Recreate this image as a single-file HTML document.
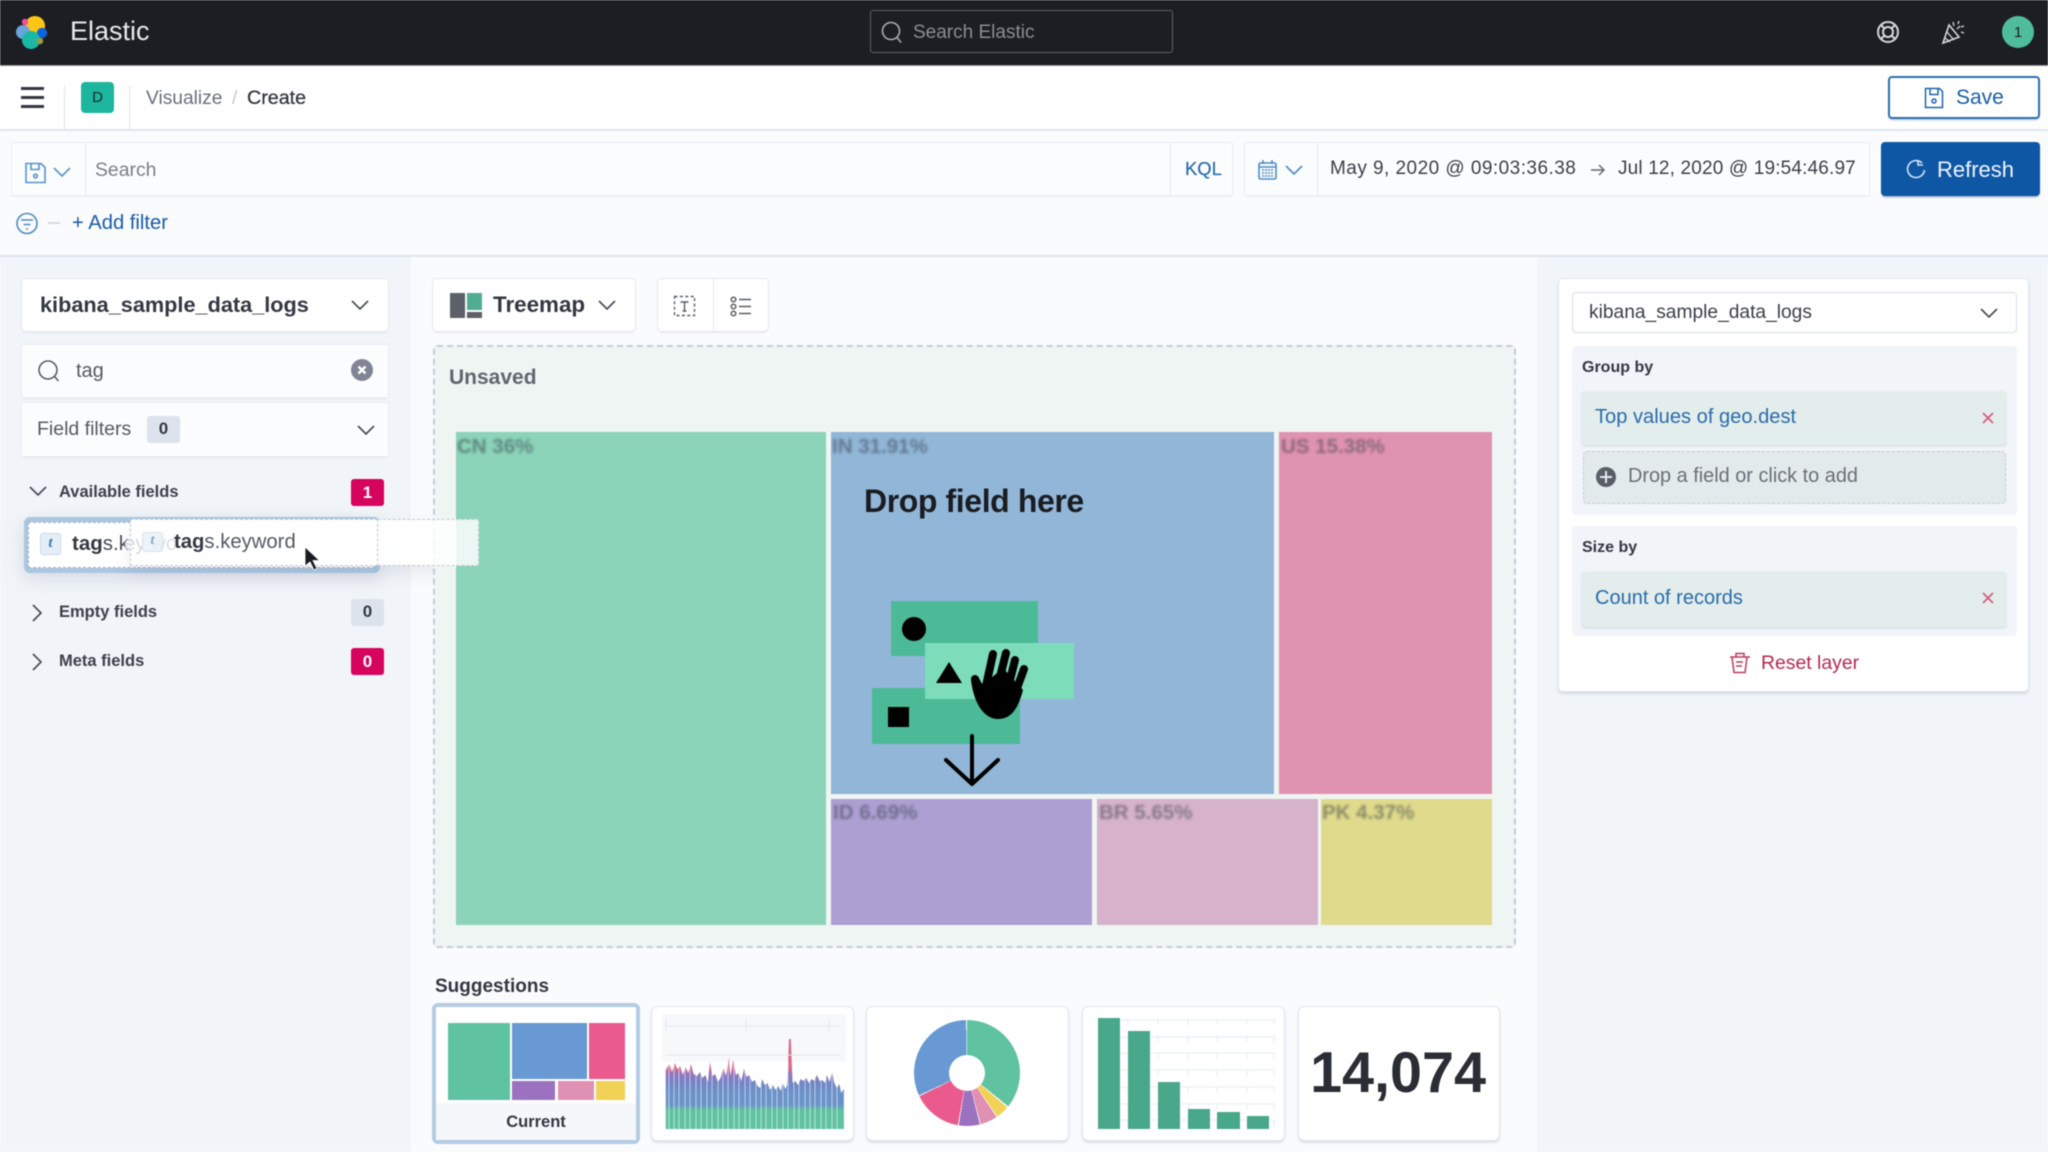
<!DOCTYPE html>
<html><head><meta charset="utf-8"><title>Elastic</title>
<style>
*{box-sizing:border-box}
html,body{margin:0;padding:0;width:2048px;height:1152px;overflow:hidden;background:#fafbfd;font-family:"Liberation Sans",sans-serif;color:#343741}
body{filter:blur(.4px)}
.a{position:absolute}
.t{position:absolute;white-space:nowrap;line-height:1}
.box{position:absolute;background:#fff;border-radius:4px;box-shadow:0 0 0 1px #e3e8f0,0 2px 2px -1px rgba(152,162,179,.45)}
.fbox{position:absolute;background:#fbfcfd;box-shadow:0 0 0 1px #e9edf3,0 2px 2px -1px rgba(152,162,179,.35)}
svg{position:absolute;overflow:visible}
.lbl{position:absolute;font-weight:bold;font-size:20.5px;line-height:1;color:rgba(50,60,70,.5);filter:blur(1.4px);white-space:nowrap}
.cell{position:absolute}
.card{position:absolute;background:#fff;border-radius:5px;box-shadow:0 0 0 1px #dfe5ef,0 2px 3px rgba(152,162,179,.5)}
</style></head><body>

<!-- top bar -->
<div class="a" style="left:0;top:0;width:2048px;height:66px;background:#1d1e24;border-bottom:1px solid #8f9196"></div>
<svg style="left:0;top:0" width="60" height="60">
<circle cx="35" cy="26" r="10" fill="#fec514"/>
<circle cx="25" cy="22" r="3.2" fill="#f04e98"/>
<circle cx="23" cy="32" r="7" fill="#6aa4dc"/>
<circle cx="42" cy="33" r="5.2" fill="#0b64dd"/>
<circle cx="31" cy="40" r="9" fill="#1bb9a5"/>
<circle cx="40" cy="41" r="3.2" fill="#9b9c3e"/>
</svg>
<div class="t" style="left:70px;top:18px;font-size:27px;color:#e9eaec">Elastic</div>
<div class="a" style="left:870px;top:10px;width:303px;height:43px;border:1px solid #5d5f65;border-radius:3px;background:#1d1e24"></div>
<svg style="left:878px;top:20px" width="28" height="24" fill="none" stroke="#a9abb0" stroke-width="1.6"><circle cx="13" cy="11" r="8.5"/><path d="M19 17.5l4 5"/></svg>
<div class="t" style="left:913px;top:23px;font-size:19px;color:#8b8d92">Search Elastic</div>
<svg style="left:1876px;top:20px" width="24" height="24" fill="none" stroke="#d6d7da" stroke-width="2"><circle cx="12" cy="12" r="10"/><circle cx="12" cy="12" r="5"/><path d="M5 5l3.5 3.5M19 5l-3.5 3.5M5 19l3.5-3.5M19 19l-3.5-3.5"/></svg>
<svg style="left:1940px;top:19px" width="26" height="26" fill="none" stroke="#d6d7da" stroke-width="1.6"><path d="M3 24L9 6l10 12z"/><path d="M7 13l7 8M5 19l5 4M13 3l1 4M19 2l-1 3M21 8l3-1M21 13l3 1M17 10l3-3" stroke-width="1.3"/></svg>
<div class="a" style="left:2002px;top:16px;width:32px;height:32px;border-radius:50%;background:#4fbd9a"></div>
<div class="t" style="left:2002px;top:25px;width:32px;text-align:center;font-size:15px;color:#1d1e24">1</div>

<!-- second bar -->
<div class="a" style="left:0;top:66px;width:2048px;height:65px;background:#fff;border-bottom:2px solid #dfe5ef"></div>
<div class="a" style="left:21px;top:87px;width:23px;height:3px;background:#343741"></div>
<div class="a" style="left:21px;top:96px;width:23px;height:3px;background:#343741"></div>
<div class="a" style="left:21px;top:105px;width:23px;height:3px;background:#343741"></div>
<div class="a" style="left:64px;top:85px;width:1px;height:45px;background:#dfe3ea"></div>
<div class="a" style="left:129px;top:85px;width:1px;height:45px;background:#dfe3ea"></div>
<div class="a" style="left:81px;top:82px;width:33px;height:31px;background:#1db59e;border-radius:4px"></div>
<div class="t" style="left:81px;top:90px;width:33px;text-align:center;font-size:15px;color:#1d2a2a">D</div>
<div class="t" style="left:146px;top:89px;font-size:19.2px;color:#69707d">Visualize</div>
<div class="t" style="left:232px;top:89px;font-size:19px;color:#c2c7cf">/</div>
<div class="t" style="left:247px;top:89px;font-size:19.7px;color:#343741;-webkit-text-stroke:.3px #343741">Create</div>
<div class="a" style="left:1888px;top:76px;width:152px;height:43px;background:#fff;border:2px solid #2b6fad;border-radius:4px;box-shadow:0 2px 2px -1px rgba(40,90,150,.4)"></div>
<svg style="left:1923px;top:87px" width="22" height="22" fill="none" stroke="#1f64ab" stroke-width="1.5"><path d="M2.5 1.5h14l3 3v16h-17z"/><path d="M7 1.5v6h8v-6"/><circle cx="11" cy="14" r="2"/></svg>
<div class="t" style="left:1956px;top:87px;font-size:21px;color:#1a5ca6">Save</div>

<!-- search row -->
<div class="fbox" style="left:12px;top:143px;width:1220px;height:52px"></div>
<div class="a" style="left:85px;top:143px;width:1px;height:52px;background:#e6eaf0"></div>
<div class="a" style="left:1170px;top:143px;width:1px;height:52px;background:#e6eaf0"></div>
<svg style="left:25px;top:162px" width="22" height="22" fill="none" stroke="#5a93c8" stroke-width="1.6"><path d="M1 1.5h15l4 4v15H1z"/><path d="M6 1.5v6h8v-6"/><circle cx="10.5" cy="14" r="1.8"/></svg>
<svg style="left:53px;top:166px" width="18" height="12" fill="none" stroke="#5a93c8" stroke-width="1.6"><path d="M1 2l8 8 8-8"/></svg>
<div class="t" style="left:95px;top:161px;font-size:19.4px;color:#7a7f88">Search</div>
<div class="t" style="left:1185px;top:160px;font-size:18.4px;color:#2a6cab;-webkit-text-stroke:.2px #2a6cab">KQL</div>
<div class="fbox" style="left:1245px;top:143px;width:624px;height:52px"></div>
<div class="a" style="left:1317px;top:143px;width:1px;height:52px;background:#e6eaf0"></div>
<svg style="left:1258px;top:159px" width="20" height="22" fill="none" stroke="#4d8cc4" stroke-width="1.6"><rect x="1" y="4" width="17" height="16" rx="1.5"/><path d="M5 1v4M14 1v4M1 8h17"/><path d="M4 11h11M4 14h11M4 17h11" stroke-dasharray="2 1" stroke-width="1.4"/></svg>
<svg style="left:1285px;top:164px" width="18" height="12" fill="none" stroke="#4d8cc4" stroke-width="1.6"><path d="M1 2l8 8 8-8"/></svg>
<div class="t" style="left:1330px;top:159px;font-size:19px;letter-spacing:.46px;color:#3b3f48">May 9, 2020 @ 09:03:36.38</div>
<svg style="left:1590px;top:163px" width="16" height="14" fill="none" stroke="#5f6570" stroke-width="1.4"><path d="M1 7h13M9 2l5 5-5 5"/></svg>
<div class="t" style="left:1618px;top:159px;font-size:19px;letter-spacing:.16px;color:#3b3f48">Jul 12, 2020 @ 19:54:46.97</div>
<div class="a" style="left:1881px;top:142px;width:159px;height:54px;background:#0e57a5;border-radius:4px;box-shadow:0 2px 2px -1px rgba(20,60,120,.5)"></div>
<svg style="left:1905px;top:159px" width="22" height="22" fill="none" stroke="#cfe0f2" stroke-width="1.6"><path d="M17 4A8.5 8.5 0 1 0 19.5 11"/><path d="M13 1v5h5"/></svg>
<div class="t" style="left:1937px;top:159px;font-size:22px;color:#eef4fb">Refresh</div>

<!-- filter row -->
<svg style="left:16px;top:212px" width="24" height="24" fill="none" stroke="#4d8cc4" stroke-width="1.6"><circle cx="11" cy="11.5" r="10"/><path d="M5 8h12M7.5 12.5h7M10 17h2"/></svg>
<div class="a" style="left:48px;top:222px;width:12px;height:1.5px;background:#d3dae6"></div>
<div class="t" style="left:72px;top:213px;font-size:20.2px;color:#1a5ca6">+ Add filter</div>

<!-- panels -->
<div class="a" style="left:0;top:255px;width:2048px;height:2px;background:#dfe5ef"></div>
<div class="a" style="left:0;top:257px;width:411px;height:895px;background:#f1f5f9"></div>
<div class="a" style="left:1537px;top:257px;width:511px;height:895px;background:#f1f5f9"></div>

<!-- left panel -->
<div class="box" style="left:22px;top:279px;width:366px;height:52px"></div>
<div class="t" style="left:40px;top:294px;font-size:21.7px;font-weight:bold;color:#343741">kibana_sample_data_logs</div>
<svg style="left:351px;top:299px" width="18" height="12" fill="none" stroke="#444851" stroke-width="1.6"><path d="M1 2l8 8 8-8"/></svg>
<div class="fbox" style="left:22px;top:345px;width:366px;height:52px"></div>
<svg style="left:37px;top:359px" width="24" height="24" fill="none" stroke="#5a5e66" stroke-width="1.6"><circle cx="11" cy="11" r="9"/><path d="M17.5 17.5l4 4.5"/></svg>
<div class="t" style="left:76px;top:361px;font-size:20px;color:#555a63">tag</div>
<div class="a" style="left:351px;top:359px;width:22px;height:22px;border-radius:50%;background:#7f8595"></div>
<svg style="left:351px;top:359px" width="22" height="22" fill="none" stroke="#fff" stroke-width="2.4"><path d="M7.5 7.5l7 7M14.5 7.5l-7 7"/></svg>
<div class="fbox" style="left:22px;top:403px;width:366px;height:53px"></div>
<div class="t" style="left:37px;top:420px;font-size:19.5px;color:#555a63">Field filters</div>
<div class="a" style="left:147px;top:416px;width:33px;height:27px;background:#dde3ec;border-radius:3px"></div>
<div class="t" style="left:147px;top:420px;width:33px;text-align:center;font-size:17px;font-weight:bold;color:#343741">0</div>
<svg style="left:357px;top:424px" width="18" height="12" fill="none" stroke="#444851" stroke-width="1.6"><path d="M1 2l8 8 8-8"/></svg>

<svg style="left:29px;top:485px" width="18" height="12" fill="none" stroke="#444851" stroke-width="1.6"><path d="M1 2l8 8 8-8"/></svg>
<div class="t" style="left:59px;top:484px;font-size:16.5px;font-weight:bold;color:#3d414a">Available fields</div>
<div class="a" style="left:351px;top:479px;width:33px;height:27px;background:#d6045f;border-radius:3px"></div>
<div class="t" style="left:351px;top:484px;width:33px;text-align:center;font-size:17px;font-weight:bold;color:#fff">1</div>

<div class="a" style="left:24px;top:517px;width:356px;height:56px;border-radius:6px;background:#a9c6e2;box-shadow:0 6px 18px rgba(120,130,150,.22)"></div>
<div class="a" style="left:28px;top:522px;width:347px;height:46px;background:#fff;border:1.5px dashed #a7afbb"></div>
<div class="a" style="left:40px;top:533px;width:21px;height:22px;background:#e3eef7;border:1px solid #c8d8e8;border-radius:3px"></div>
<div class="t" style="left:40px;top:536px;width:21px;text-align:center;font-size:15px;font-family:'Liberation Serif',serif;font-style:italic;font-weight:bold;color:#3a7ab0">t</div>
<div class="t" style="left:72px;top:534px;font-size:20.5px;color:#474c55"><b style="color:#343741">tag</b>s.k</div>
<div class="a" style="left:130px;top:519px;width:349px;height:47px;background:rgba(255,255,255,.72);border:1.5px dashed #c3c9d3;box-shadow:0 8px 16px rgba(120,130,150,.14)"></div>
<div class="a" style="left:130px;top:519px;width:248px;height:47px;background:#fff;border:1.5px dashed #c3c9d3;border-right-width:1.5px"></div>
<div class="t" style="left:124px;top:534px;font-size:20.5px;color:#d5d9df">ey</div>
<div class="t" style="left:151px;top:534px;font-size:20.5px;color:#dde0e5">wo</div>
<div class="a" style="left:142px;top:532px;width:21px;height:20px;background:rgba(233,241,248,.85);border:1px solid #d8e2ec;border-radius:3px"></div>
<div class="t" style="left:142px;top:534px;width:21px;text-align:center;font-size:14px;font-family:'Liberation Serif',serif;font-style:italic;font-weight:bold;color:#7ea8cb">t</div>
<div class="t" style="left:174px;top:532px;font-size:20.3px;color:#555a63"><b style="color:#343741">tag</b>s.keyword</div>
<svg style="left:304px;top:546px" width="18" height="26"><path d="M1 1v19l5-4 4 8 3-1.5-4-8h6.5z" fill="#1a1c21" stroke="#fff" stroke-width=".8"/></svg>

<svg style="left:31px;top:604px" width="12" height="18" fill="none" stroke="#444851" stroke-width="1.6"><path d="M2 1l8 8-8 8"/></svg>
<div class="t" style="left:59px;top:604px;font-size:16.5px;font-weight:bold;color:#3d414a">Empty fields</div>
<div class="a" style="left:351px;top:599px;width:33px;height:27px;background:#dde3ec;border-radius:3px"></div>
<div class="t" style="left:351px;top:603px;width:33px;text-align:center;font-size:17px;font-weight:bold;color:#343741">0</div>
<svg style="left:31px;top:653px" width="12" height="18" fill="none" stroke="#444851" stroke-width="1.6"><path d="M2 1l8 8-8 8"/></svg>
<div class="t" style="left:59px;top:653px;font-size:16.5px;font-weight:bold;color:#3d414a">Meta fields</div>
<div class="a" style="left:351px;top:648px;width:33px;height:27px;background:#d6045f;border-radius:3px"></div>
<div class="t" style="left:351px;top:653px;width:33px;text-align:center;font-size:17px;font-weight:bold;color:#fff">0</div>

<!-- chart switcher -->
<div class="box" style="left:433px;top:279px;width:202px;height:52px"></div>
<svg style="left:450px;top:293px" width="32" height="25"><rect x="0" y="0" width="15" height="25" fill="#5c6068"/><rect x="17" y="0" width="15" height="17" fill="#4fae8f"/><rect x="17" y="19" width="15" height="6" fill="#5c6068"/></svg>
<div class="t" style="left:493px;top:294px;font-size:22.4px;font-weight:bold;color:#343741">Treemap</div>
<svg style="left:598px;top:299px" width="18" height="12" fill="none" stroke="#444851" stroke-width="1.6"><path d="M1 2l8 8 8-8"/></svg>
<div class="box" style="left:658px;top:279px;width:110px;height:52px"></div>
<div class="a" style="left:713px;top:279px;width:1px;height:52px;background:#dfe5ef"></div>
<svg style="left:673px;top:295px" width="24" height="22" fill="none" stroke="#5a5e66" stroke-width="1.4"><rect x="1.5" y="1.5" width="20" height="19" stroke-dasharray="3 2.4"/><path d="M7.5 7h8M11.5 7v9M9.5 16h4"/></svg>
<svg style="left:730px;top:296px" width="22" height="21" fill="none" stroke="#5a5e66" stroke-width="1.5"><circle cx="3.5" cy="3.5" r="2.3"/><circle cx="3.5" cy="10.5" r="2.3"/><circle cx="3.5" cy="17.5" r="2.3"/><path d="M9 3.5h12M9 10.5h12M9 17.5h12"/></svg>

<!-- workspace -->
<div class="a" style="left:433px;top:345px;width:1083px;height:603px;background:#eff5f3;border:2px dashed #c4ccd9;border-radius:4px"></div>
<div class="t" style="left:449px;top:367px;font-size:21px;font-weight:bold;color:#62666f">Unsaved</div>
<div class="cell" style="left:456px;top:432px;width:370px;height:493px;background:#8bd3b9"></div>
<div class="cell" style="left:831px;top:432px;width:443px;height:362px;background:#91b6d8"></div>
<div class="cell" style="left:1279px;top:432px;width:213px;height:362px;background:#e093b0"></div>
<div class="cell" style="left:831px;top:799px;width:261px;height:126px;background:#ad9fd2"></div>
<div class="cell" style="left:1097px;top:799px;width:221px;height:126px;background:#d7b3cb"></div>
<div class="cell" style="left:1321px;top:799px;width:171px;height:126px;background:#e0da8c"></div>
<div class="lbl" style="left:457px;top:437px">CN 36%</div>
<div class="lbl" style="left:832px;top:437px">IN 31.91%</div>
<div class="lbl" style="left:1281px;top:437px">US 15.38%</div>
<div class="lbl" style="left:833px;top:803px">ID 6.69%</div>
<div class="lbl" style="left:1099px;top:803px">BR 5.65%</div>
<div class="lbl" style="left:1322px;top:803px">PK 4.37%</div>
<!-- drag tail over workspace -->
<div class="a" style="left:378px;top:519px;width:101px;height:47px;background:rgba(255,255,255,.82);border:1.5px dashed #c3c9d3;border-left:0"></div>

<div class="t" style="left:864px;top:485px;font-size:32px;font-weight:bold;letter-spacing:-.4px;color:#1a1c21">Drop field here</div>
<svg style="left:860px;top:595px" width="230" height="200">
<g transform="translate(-860,-595)">
<rect x="891" y="601" width="147" height="55" fill="#4cba96"/>
<rect x="872" y="688" width="148" height="56" fill="#4cba96"/>
<rect x="925" y="643" width="149" height="56" fill="#7ddcb9"/>
<circle cx="914" cy="629" r="12"/>
<path d="M949 662l13 21h-26z"/>
<rect x="888" y="707" width="21" height="20"/>
<path d="M971 680C974 705 985 719 998 719 1012 719 1018 708 1023 690L1003 668 984 684z"/>
<g fill="none" stroke="#000" stroke-width="8" stroke-linecap="round"><path d="M975 679l8 16M993 654l-7 32M1006 653l-8 32M1015 660l-7 28M1024 669l-8 22"/></g>
<path d="M972 736v48M946 760l26 24 26-24" fill="none" stroke="#000" stroke-width="4" stroke-linecap="round" stroke-linejoin="round"/>
</g></svg>

<!-- suggestions -->
<div class="t" style="left:435px;top:977px;font-size:19px;font-weight:bold;color:#343741">Suggestions</div>
<div class="a" style="left:432px;top:1003px;width:208px;height:141px;background:#fff;border:4px solid #b4cce4;border-radius:6px"></div>
<div class="a" style="left:436px;top:1103px;width:200px;height:37px;background:#f5f7fa"></div>
<div class="cell" style="left:448px;top:1023px;width:62px;height:77px;background:#5fc2a1"></div>
<div class="cell" style="left:512px;top:1023px;width:75px;height:56px;background:#6899d3"></div>
<div class="cell" style="left:589px;top:1023px;width:36px;height:56px;background:#ea5a8d"></div>
<div class="cell" style="left:512px;top:1081px;width:43px;height:19px;background:#9b71c0"></div>
<div class="cell" style="left:558px;top:1081px;width:36px;height:19px;background:#e090b2"></div>
<div class="cell" style="left:596px;top:1081px;width:29px;height:19px;background:#f1d156"></div>
<div class="t" style="left:436px;top:1114px;width:200px;text-align:center;font-size:16.5px;font-weight:bold;color:#343741">Current</div>

<div class="card" style="left:652px;top:1007px;width:201px;height:133px"></div>
<div class="a" style="left:662px;top:1014px;width:184px;height:48px;background:#f6f8fa"></div>
<svg style="left:663px;top:1010px" width="180" height="122">
<defs>
<linearGradient id="sg" gradientUnits="userSpaceOnUse" x1="0" y1="8" x2="0" y2="119"><stop offset="0" stop-color="#d96b8c"/><stop offset=".45" stop-color="#d96b8c"/><stop offset=".5" stop-color="#9574bd"/><stop offset=".58" stop-color="#7385c6"/><stop offset=".68" stop-color="#6b93c9"/><stop offset=".78" stop-color="#6b93c9"/><stop offset=".83" stop-color="#5fc2a1"/><stop offset="1" stop-color="#62c2a2"/></linearGradient>
</defs>
<g transform="translate(0,0) scale(.9,1)">
<path fill="url(#sg)" d="M3 119V60l4-6 3 8 3-9 3 6 3-3 3 9 3-8 3 6 3-9 3 10 4 2 3-4 3 6 3-3 3 7 2-20 3 14 3-2 3 8 3-4 3-10 3 8 3-18 2 18 3-16 3 15 3-2 3 8 3-12 3 8 3-2 3 7 3-2 3 6 3 2 2-9 3 6 3-2 3 7 3-5 3 5 3-4 3 5 2-8 3 6 2-4 2-46h2l2 44 3-2 3 4 3-6 3 2 3-3 3 5 3-4 3 2 3-6 3 6 3-1 3 3 2-8 3 7 3-10 2 10 3 6 3-4 2 9 3-4V119z"/>
</g>
<g stroke="#fff" stroke-width="1" opacity=".55"><path d="M6 50v69M11 50v69M16 50v69M22 50v69M27 50v69M33 50v69M38 50v69M44 50v69M49 50v69M55 50v69M60 50v69M65 50v69M71 50v69M76 50v69M82 50v69M87 50v69M93 50v69M98 50v69M103 50v69M109 50v69M114 50v69M120 50v69M125 50v69M131 50v69M136 50v69M142 50v69M147 50v69M152 50v69M158 50v69M163 50v69M169 50v69M174 50v69"/></g>
<g stroke="#e3e7ee" stroke-width="1" fill="none"><path d="M3 9v12M83 9v12M166 9v12M3 16h175M3 45h175"/></g>
</svg>

<div class="card" style="left:867px;top:1007px;width:201px;height:133px"></div>
<div class="a" style="left:914px;top:1020px;width:106px;height:106px;border-radius:50%;background:conic-gradient(#5fc2a1 0 129deg,#fff 129deg 130.5deg,#f1d156 130.5deg 145deg,#fff 145deg 146deg,#e090b2 146deg 165deg,#fff 165deg 166deg,#9b71c0 166deg 189deg,#fff 189deg 190deg,#ea5a8d 190deg 244deg,#fff 244deg 245deg,#6899d3 245deg 359deg,#fff 359deg 360deg)"></div>
<div class="a" style="left:949px;top:1055px;width:36px;height:36px;border-radius:50%;background:#fff"></div>

<div class="card" style="left:1083px;top:1007px;width:201px;height:133px"></div>
<svg style="left:1090px;top:1010px" width="190" height="122">
<g transform="translate(-1090,-1010)">
<g stroke="#eef1f6" stroke-width="1.5" fill="none"><path d="M1098 1020H1274M1098 1037H1274M1098 1053H1274M1098 1070H1274M1098 1087H1274M1098 1104H1274M1098 1120H1274"/><path d="M1128 1018v111M1158 1018v111M1188 1018v111M1217 1018v111M1247 1018v111M1274 1018v111" stroke-dasharray="7 10"/></g>
<g fill="#4aa88a"><rect x="1098" y="1018" width="22" height="111"/><rect x="1128" y="1031" width="22" height="98"/><rect x="1158" y="1082" width="22" height="47"/><rect x="1188" y="1109" width="22" height="20"/><rect x="1217" y="1112" width="23" height="17"/><rect x="1247" y="1116" width="22" height="13"/></g>
</g></svg>

<div class="card" style="left:1299px;top:1007px;width:200px;height:133px"></div>
<div class="t" style="left:1298px;top:1045px;width:200px;text-align:center;font-size:57.5px;font-weight:bold;color:#2a2d34">14,074</div>

<!-- right panel -->
<div class="box" style="left:1559px;top:279px;width:469px;height:412px;box-shadow:0 0 0 1px #dfe5ef,0 2px 3px rgba(152,162,179,.5)"></div>
<div class="a" style="left:1572px;top:292px;width:445px;height:41px;background:#fff;border:1px solid #d9dfe9;border-radius:4px"></div>
<div class="t" style="left:1589px;top:303px;font-size:19.2px;color:#3b3f48">kibana_sample_data_logs</div>
<svg style="left:1980px;top:307px" width="18" height="12" fill="none" stroke="#444851" stroke-width="1.6"><path d="M1 2l8 8 8-8"/></svg>
<div class="a" style="left:1572px;top:346px;width:445px;height:169px;background:#f1f5f9;border-radius:4px"></div>
<div class="t" style="left:1582px;top:360px;font-size:16px;font-weight:bold;color:#343741">Group by</div>
<div class="a" style="left:1582px;top:391px;width:424px;height:54px;background:#e3edec;border-radius:3px;box-shadow:0 1px 2px rgba(152,162,179,.4)"></div>
<div class="t" style="left:1595px;top:407px;font-size:20.1px;color:#2a6cab">Top values of geo.dest</div>
<svg style="left:1981px;top:411px" width="14" height="14" fill="none" stroke="#d25b7b" stroke-width="1.6"><path d="M2 2l10 10M12 2L2 12"/></svg>
<div class="a" style="left:1583px;top:451px;width:423px;height:53px;background:#e3eaec;border:1.5px dashed #c2cad6;border-radius:4px"></div>
<div class="a" style="left:1596px;top:467px;width:20px;height:20px;border-radius:50%;background:#5a5e66"></div>
<svg style="left:1596px;top:467px" width="20" height="20" stroke="#e3eaec" stroke-width="2"><path d="M10 4v12M4 10h12"/></svg>
<div class="t" style="left:1628px;top:467px;font-size:19.9px;color:#6b6f78">Drop a field or click to add</div>
<div class="a" style="left:1572px;top:526px;width:445px;height:110px;background:#f1f5f9;border-radius:4px"></div>
<div class="t" style="left:1582px;top:540px;font-size:16px;font-weight:bold;color:#343741">Size by</div>
<div class="a" style="left:1582px;top:572px;width:424px;height:55px;background:#e3edec;border-radius:3px;box-shadow:0 1px 2px rgba(152,162,179,.4)"></div>
<div class="t" style="left:1595px;top:588px;font-size:20px;color:#2a6cab">Count of records</div>
<svg style="left:1981px;top:591px" width="14" height="14" fill="none" stroke="#d25b7b" stroke-width="1.6"><path d="M2 2l10 10M12 2L2 12"/></svg>
<svg style="left:1729px;top:652px" width="22" height="22" fill="none" stroke="#bd3b5f" stroke-width="1.5"><path d="M1 5h20M7 5V1.5h8V5M3 5l2 15.5h11l2-15.5M7 10h7M7 14h6"/></svg>
<div class="t" style="left:1761px;top:654px;font-size:19.4px;color:#b7294f">Reset layer</div>
</body></html>
